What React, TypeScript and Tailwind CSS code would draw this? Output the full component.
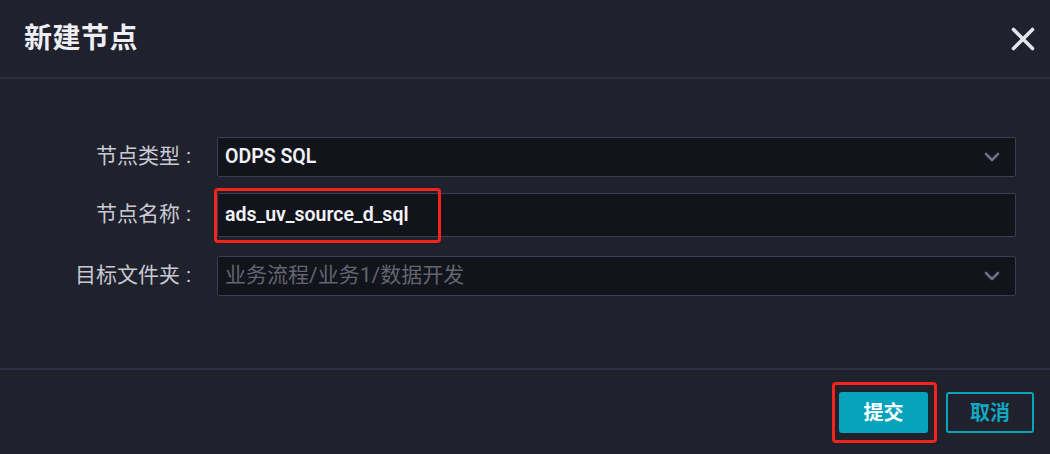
import { ChevronDown } from 'lucide-react';

const FONT = { fontFamily: 'Roboto, "Noto Sans CJK SC", sans-serif' };

function Label({ text }: { text: string }) {
  return (
    <label className="w-[196px] flex justify-end items-center text-[21px] text-[#c8c9d2] pr-[5px]">
      <span>{text}</span>
      <span className="ml-[6px]">:</span>
    </label>
  );
}

function SelectBox({ value, placeholder }: { value?: string; placeholder?: string }) {
  return (
    <div className="flex-1 h-[40px] bg-[#12141c] border border-[#3b3d50] rounded-[2px] flex items-center justify-between pl-[7px] pr-[11px]">
      {value ? (
        <span className="text-[19.5px] font-semibold text-[#f2f2f6]">{value}</span>
      ) : (
        <span className="text-[21px] text-[#62646f]">{placeholder}</span>
      )}
      <ChevronDown className="w-[24px] h-[24px] text-[#6c6e85]" strokeWidth={2.6} />
    </div>
  );
}

export default function App() {
  return (
    <div className="w-[1050px] h-[454px] bg-[#1f212d] flex flex-col" style={FONT}>
      {/* header */}
      <div className="h-[79px] flex items-center justify-between pl-[24px] pr-[15px] border-b-2 border-[#2e3042]">
        <h2 className="text-[28px] font-semibold text-[#eeeef4] tracking-[0.5px]">新建节点</h2>
        <svg width="24" height="24" viewBox="0 0 24 24" className="text-[#e4e4ee]">
          <path d="M2.5 2.5 L21.5 21.5 M21.5 2.5 L2.5 21.5" stroke="currentColor" strokeWidth="3.6" strokeLinecap="round" />
        </svg>
      </div>

      {/* form */}
      <div className="flex-1 flex flex-col pt-[58px] pr-[34px]">
        <div className="flex items-center">
          <Label text="节点类型" />
          <div className="ml-[21px] flex-1 flex">
            <SelectBox value="ODPS SQL" />
          </div>
        </div>

        <div className="flex items-center mt-[16px]">
          <Label text="节点名称" />
          <div className="ml-[21px] flex-1 relative">
            <div className="h-[44px] bg-[#12141c] border border-[#3b3d50] rounded-[2px] flex items-center pl-[7px]">
              <span className="text-[19.5px] font-semibold text-[#f4f4f8]">ads_uv_source_d_sql</span>
            </div>
            <span className="absolute -left-[3px] -top-[5px] w-[227px] h-[55px] border-[3px] border-[#f4231c] rounded-[4px]" />
          </div>
        </div>

        <div className="flex items-center mt-[19px]">
          <Label text="目标文件夹" />
          <div className="ml-[21px] flex-1 flex">
            <SelectBox placeholder="业务流程/业务1/数据开发" />
          </div>
        </div>
      </div>

      {/* footer */}
      <div className="h-[86px] border-t-2 border-[#2e3042] flex items-start justify-end pt-[22px] pr-[16px] gap-[18px]">
        <div className="relative">
          <button className="w-[89px] h-[41px] bg-[#07a3bd] rounded-[3px] text-[20px] font-semibold text-white">提交</button>
          <span className="absolute -left-[7px] -top-[10px] w-[105px] h-[61px] border-[3px] border-[#f4231c] rounded-[4px]" />
        </div>
        <button className="w-[88px] h-[41px] border-2 border-[#0aa3bd] rounded-[3px] text-[20px] font-semibold text-[#11a8c2]">取消</button>
      </div>
    </div>
  );
}
